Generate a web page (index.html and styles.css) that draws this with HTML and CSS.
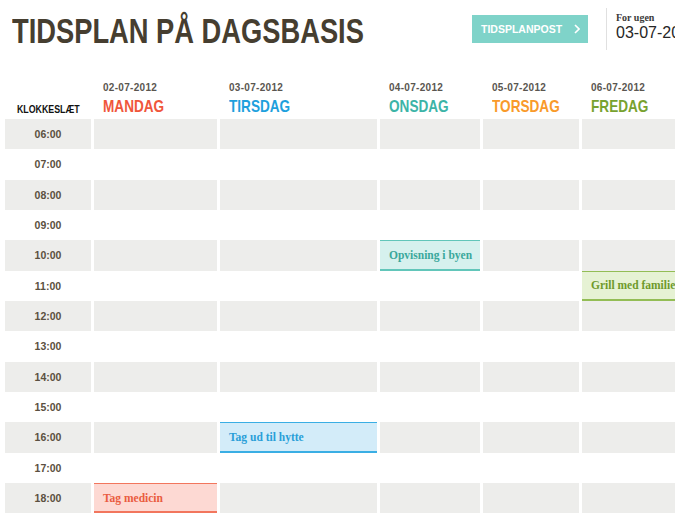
FILE: index.html
```html
<!DOCTYPE html>
<html lang="da">
<head>
<meta charset="utf-8">
<title>Tidsplan på dagsbasis</title>
<link rel="stylesheet" href="styles.css">
</head>
<body>
<div class="page">
  <header class="top">
    <div class="title-wrap"><h1 class="title">TIDSPLAN PÅ DAGSBASIS</h1></div>
    <button class="post" type="button"><span>TIDSPLANPOST</span><svg class="chev" width="6" height="10" viewBox="0 0 6 10"><polyline points="1,1 5,5 1,9" fill="none" stroke="#ffffff" stroke-width="1.6"/></svg></button>
    <div class="week">
      <div class="week-label">For ugen</div>
      <div class="week-date">03-07-2012</div>
    </div>
  </header>

  <div class="grid">
    <div class="head head-time"><span class="klok">KLOKKESLÆT</span></div>
    <div class="head"><div class="date">02-07-2012</div><div class="day mon">MANDAG</div></div>
    <div class="head"><div class="date">03-07-2012</div><div class="day tue">TIRSDAG</div></div>
    <div class="head"><div class="date">04-07-2012</div><div class="day wed">ONSDAG</div></div>
    <div class="head"><div class="date">05-07-2012</div><div class="day thu">TORSDAG</div></div>
    <div class="head"><div class="date">06-07-2012</div><div class="day fri">FREDAG</div></div>

    <div class="time alt">06:00</div><div class="cell alt"></div><div class="cell alt"></div><div class="cell alt"></div><div class="cell alt"></div><div class="cell alt"></div>
    <div class="time">07:00</div><div class="cell"></div><div class="cell"></div><div class="cell"></div><div class="cell"></div><div class="cell"></div>
    <div class="time alt">08:00</div><div class="cell alt"></div><div class="cell alt"></div><div class="cell alt"></div><div class="cell alt"></div><div class="cell alt"></div>
    <div class="time">09:00</div><div class="cell"></div><div class="cell"></div><div class="cell"></div><div class="cell"></div><div class="cell"></div>
    <div class="time alt">10:00</div><div class="cell alt"></div><div class="cell alt"></div><div class="cell event ev-wed">Opvisning i byen</div><div class="cell alt"></div><div class="cell alt"></div>
    <div class="time">11:00</div><div class="cell"></div><div class="cell"></div><div class="cell"></div><div class="cell"></div><div class="cell event ev-fri">Grill med familien</div>
    <div class="time alt">12:00</div><div class="cell alt"></div><div class="cell alt"></div><div class="cell alt"></div><div class="cell alt"></div><div class="cell alt"></div>
    <div class="time">13:00</div><div class="cell"></div><div class="cell"></div><div class="cell"></div><div class="cell"></div><div class="cell"></div>
    <div class="time alt">14:00</div><div class="cell alt"></div><div class="cell alt"></div><div class="cell alt"></div><div class="cell alt"></div><div class="cell alt"></div>
    <div class="time">15:00</div><div class="cell"></div><div class="cell"></div><div class="cell"></div><div class="cell"></div><div class="cell"></div>
    <div class="time alt">16:00</div><div class="cell alt"></div><div class="cell event ev-tue">Tag ud til hytte</div><div class="cell alt"></div><div class="cell alt"></div><div class="cell alt"></div>
    <div class="time">17:00</div><div class="cell"></div><div class="cell"></div><div class="cell"></div><div class="cell"></div><div class="cell"></div>
    <div class="time alt">18:00</div><div class="cell event ev-mon">Tag medicin</div><div class="cell alt"></div><div class="cell alt"></div><div class="cell alt"></div><div class="cell alt"></div>
  </div>
</div>
</body>
</html>
```

FILE: styles.css
```css
html, body {
  margin: 0;
  padding: 0;
  background: #ffffff;
  overflow: hidden;
}

.page {
  width: 675px;
  height: 520px;
  overflow: hidden;
  font-family: "Liberation Sans", Arial, sans-serif;
}

.top {
  display: flex;
  align-items: flex-start;
  height: 78px;
  width: 675px;
}

.title-wrap {
  width: 360px;
  margin: 13px 0 0 12px;
  white-space: nowrap;
}

.title {
  display: inline-block;
  margin: 0;
  font-family: "Liberation Sans", Arial, sans-serif;
  font-weight: bold;
  font-size: 35px;
  line-height: 35px;
  color: #463e30;
  transform: scaleX(0.78);
  transform-origin: left center;
}

.post {
  display: flex;
  align-items: center;
  margin: 15px 18px 0 auto;
  width: 116px;
  height: 28px;
  border: 0;
  padding: 0 0 0 9px;
  background: #7fd3c9;
  color: #ffffff;
  font-family: "Liberation Sans", Arial, sans-serif;
  font-weight: bold;
  font-size: 10.5px;
  white-space: nowrap;
}

.chev {
  margin-left: 12px;
}

.week {
  margin-top: 8px;
  width: 59px;
  height: 42px;
  border-left: 1px solid #e0e0e0;
  padding-left: 9px;
  overflow: hidden;
  white-space: nowrap;
}

.week-label {
  margin-top: 4px;
  font-family: "Liberation Serif", "Times New Roman", serif;
  font-weight: bold;
  font-size: 10px;
  line-height: 12px;
  color: #3a3a3a;
}

.week-date {
  font-size: 16px;
  line-height: 18px;
  color: #262626;
}

.grid {
  display: grid;
  grid-template-columns: 86px 123px 157px 100px 96px 110px;
  grid-template-rows: 41px;
  grid-auto-rows: 30.33px;
  column-gap: 3px;
  margin-left: 5px;
  width: 690px;
}

.head {
  display: flex;
  flex-direction: column;
  justify-content: flex-end;
  align-items: flex-start;
  padding: 0 0 3px 9px;
}

.head-time {
  padding: 0 0 4px 0;
  align-items: center;
}

.klok {
  display: inline-block;
  font-weight: bold;
  font-size: 10.5px;
  line-height: 12px;
  color: #111111;
  white-space: nowrap;
  transform: scaleX(0.84);
  transform-origin: center;
}

.date {
  font-weight: bold;
  font-size: 10px;
  line-height: 12px;
  letter-spacing: 0.3px;
  color: #5a5650;
  margin-bottom: 4px;
}

.day {
  display: inline-block;
  font-size: 17px;
  font-weight: bold;
  line-height: 18px;
  white-space: nowrap;
  transform: scaleX(0.8);
  transform-origin: left center;
}

.mon { color: #f0563b; }
.tue { color: #1ea0dd; }
.wed { color: #3cb4a7; }
.thu { color: #f99a2a; }
.fri { color: #78a22f; }

.time {
  display: flex;
  align-items: center;
  justify-content: center;
  font-weight: bold;
  font-size: 10.5px;
  color: #5b5040;
}

.alt {
  background: #ededeb;
}

.event {
  box-sizing: border-box;
  display: flex;
  align-items: center;
  padding-left: 9px;
  border-top: 1px solid;
  border-bottom: 2px solid;
  font-family: "Liberation Serif", "Times New Roman", serif;
  font-weight: bold;
  font-size: 11.5px;
  white-space: nowrap;
  overflow: hidden;
}

.ev-mon {
  background: #fdd9d3;
  border-color: #f2765d;
  color: #ea5c40;
}

.ev-tue {
  background: #d3ecf9;
  border-color: #3aaee4;
  color: #2a9fd8;
}

.ev-wed {
  background: #d6f1ee;
  border-color: #62c6ba;
  color: #3aa89c;
}

.ev-fri {
  background: #e6f2d4;
  border-color: #93bd55;
  color: #6f9a2c;
}
```
